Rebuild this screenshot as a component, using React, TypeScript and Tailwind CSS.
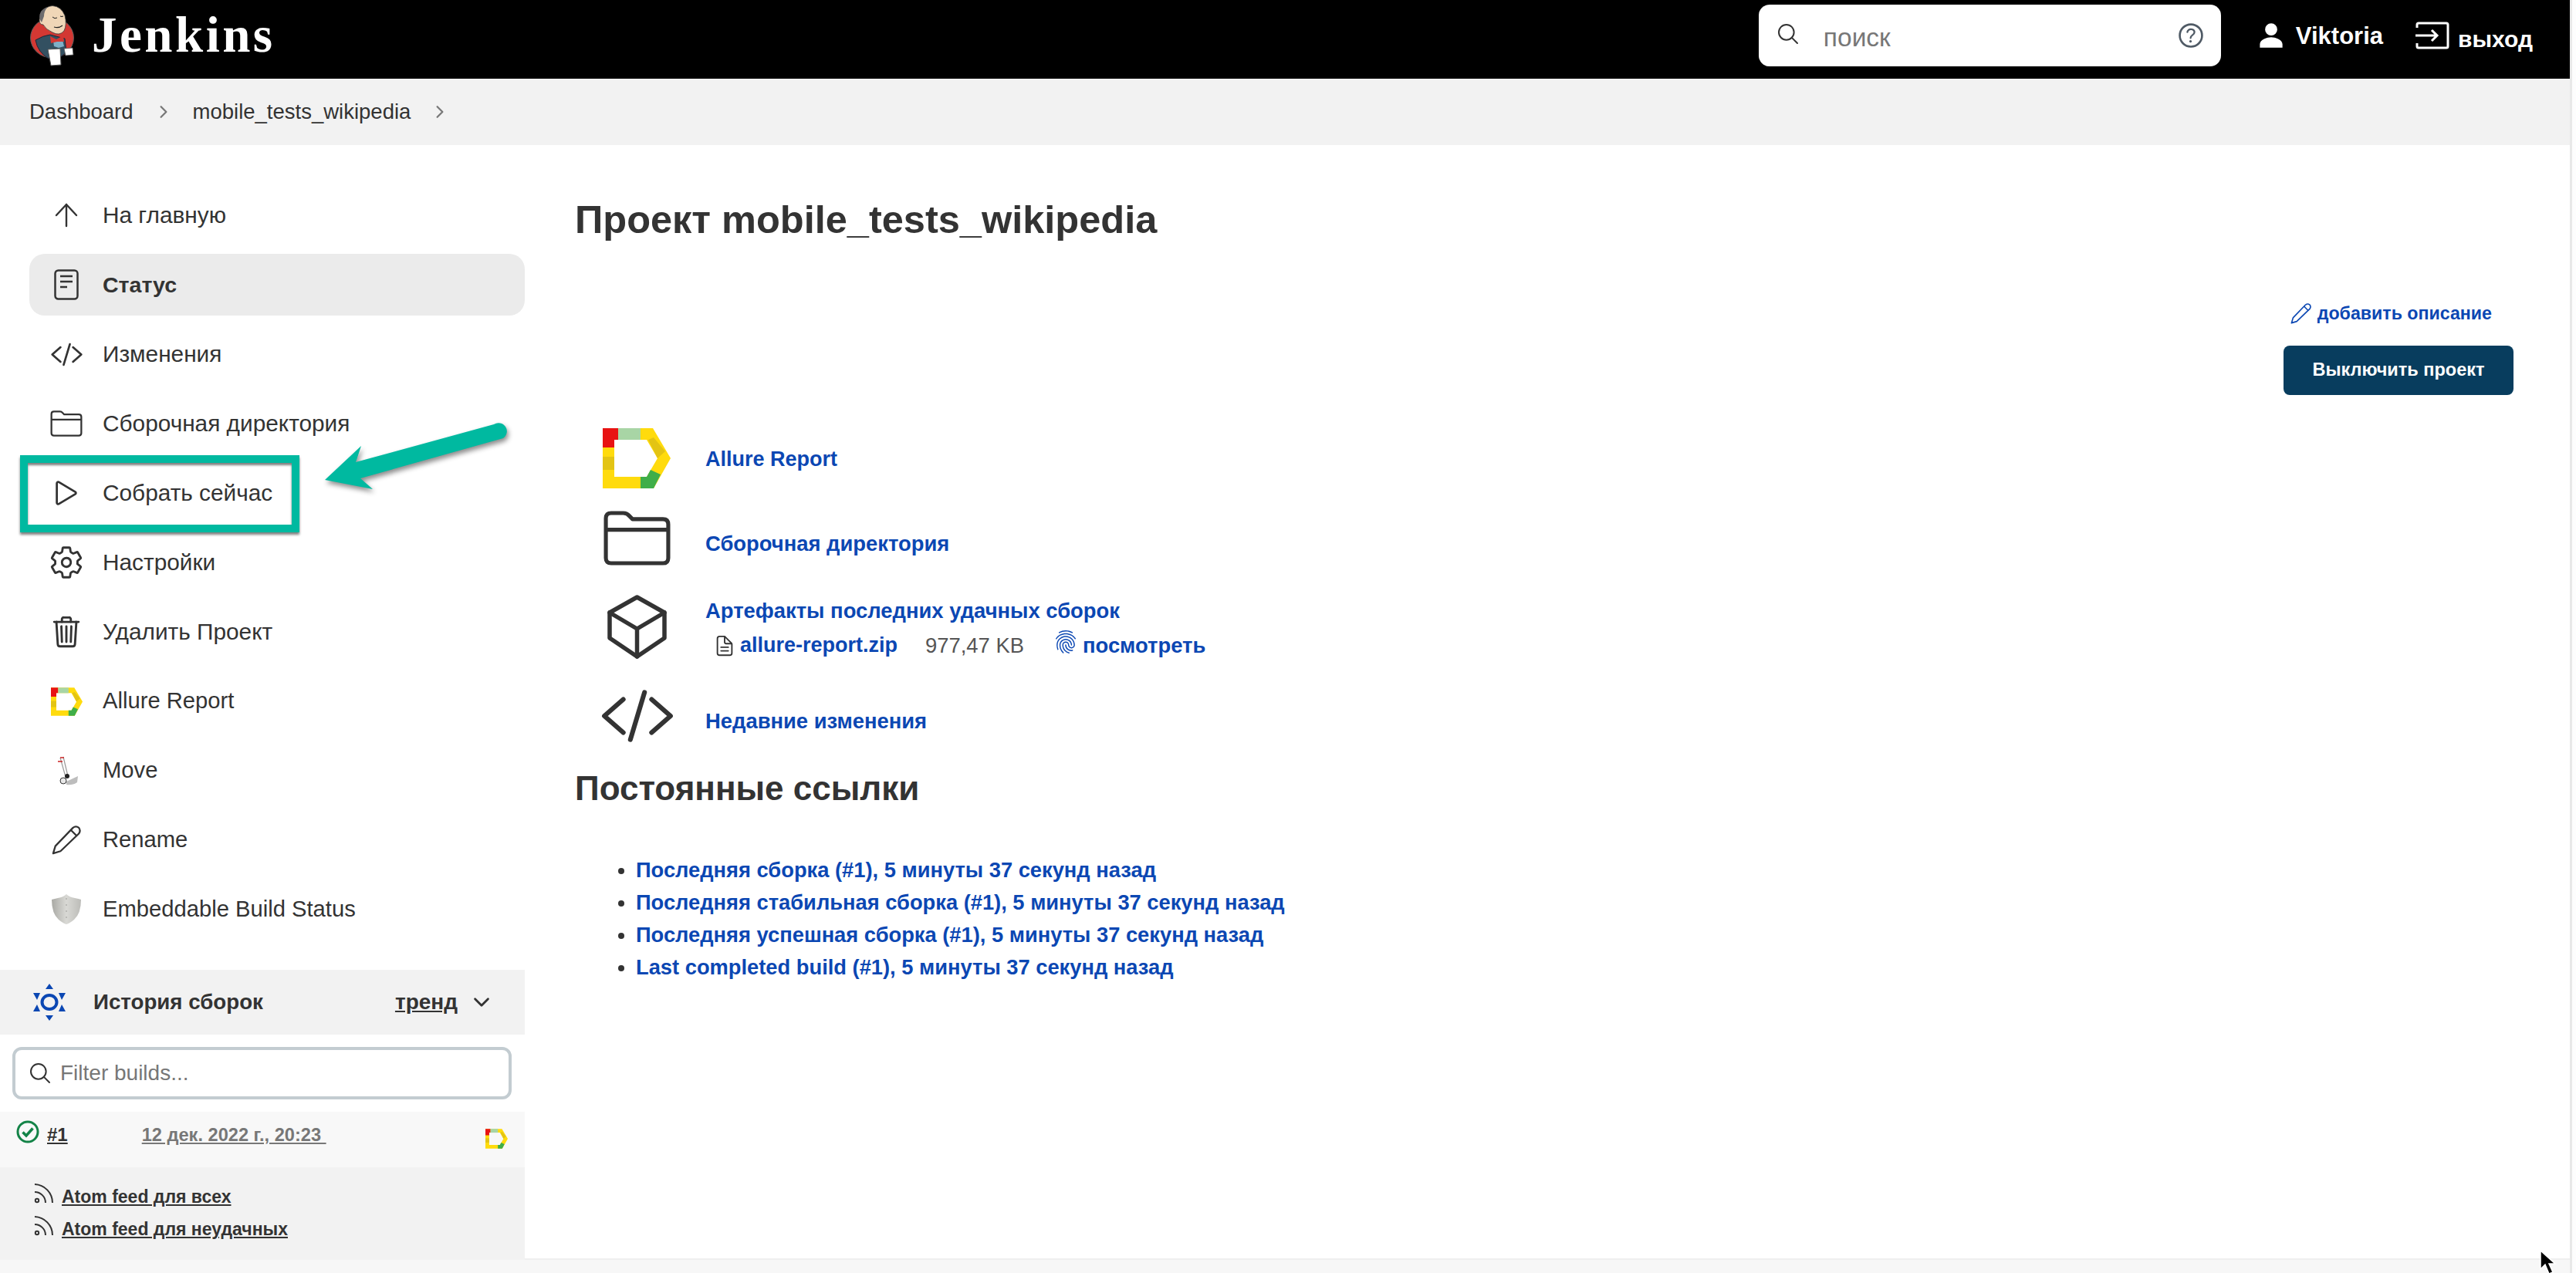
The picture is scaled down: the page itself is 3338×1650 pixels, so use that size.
import {
  IoChevronDownOutline,
  IoChevronForwardOutline,
  IoCodeSlashOutline,
  IoDocumentTextOutline,
  IoFingerPrintOutline,
  IoHelpCircleOutline,
  IoPersonSharp,
  IoPlayOutline,
  IoSearchOutline,
  IoSettingsOutline,
  IoTrashOutline,
} from 'react-icons/io5';
import type { ReactNode } from 'react';

const JenkinsLogo = () => (
  <svg viewBox="38 6 58 80" className="w-[58px] h-[80px] shrink-0">
    <ellipse cx="66.5" cy="49" rx="28" ry="26" fill="#d33833" stroke="#5b5b5b" strokeWidth="1" />
    <path d="M45 52 Q55 46 64 45 L83 50 L85 68 L77 74 L62 76 Q48 68 45 52Z" fill="#335061" stroke="#223" strokeWidth="1" />
    <path d="M68 53 L80 52 L82 60 L75 62 L69 60Z" fill="#7fb0c8" />
    <path d="M64 47 L72 51 L81 46 L82 54 L73 54 L65 56Z" fill="#d33833" />
    <path d="M53 17 Q58 8 67 7.5 Q78 8 83 20 Q86 32 82 40 Q76 47 67 42 Q58 38 55 32 Q50 32 50 26 Q50 22 53 17Z" fill="#f0d6b7" stroke="#3a3a3a" strokeWidth="0.8" />
    <path d="M53 29 Q48 22 52 15 Q56 10 61 9 Q56 14 56 21 Z" fill="#6d6b6d" />
    <path d="M67 22 Q70 25 73 23 M77 21 Q79 22 81 21" stroke="#222" strokeWidth="1" fill="none" />
    <path d="M69 35 Q75 37 80 33" stroke="#222" strokeWidth="1.2" fill="none" />
    <path d="M61 64 L77 63 L78 84 L65 85Z" fill="#fff" stroke="#555" strokeWidth="1" />
    <path d="M82 63 L93 62 L94 71 L84 72Z" fill="#fff" stroke="#555" strokeWidth="0.8" />
  </svg>
);

const AllureIcon = ({ className }: { className: string }) => (
  <svg viewBox="0 0 88 78" className={className}>
    <path fillRule="evenodd" d="M0 0H65L88 39L66 78H0ZM15 15V63H57L71 39L57 15Z" fill="#ffdb0d" />
    <path d="M0 0H20V15H15V25H0Z" fill="#e81313" />
    <path d="M20 0H49V15H20Z" fill="#a8d5a5" />
    <path d="M0 37H15V54H0Z" fill="#e3c414" />
    <path d="M59 15L66 12L81 30L71 39Z" fill="#e3c414" />
    <path d="M49 63H57L62 54L75 60L66 78H49Z" fill="#3fae49" />
  </svg>
);

const FolderIcon = ({ className, w = 2 }: { className: string; w?: number }) => (
  <svg viewBox="0 0 44 36" className={className} fill="none" stroke="#333" strokeWidth={w}>
    <path d="M1.5 7V5Q1.5 1.5 5 1.5H13Q15.5 1.5 17 3.5L19 5.5H39Q42.5 5.5 42.5 9V31Q42.5 34.5 39 34.5H5Q1.5 34.5 1.5 31Z" strokeLinejoin="round" />
    <path d="M1.5 12.5H42.5" />
  </svg>
);

const ArrowUpIcon = () => (
  <svg viewBox="0 0 30 32" className="w-[30px] h-[32px]" fill="none" stroke="#333" strokeWidth="2.4" strokeLinecap="round" strokeLinejoin="round">
    <path d="M15 30V2M2 16L15 2L28 16" />
  </svg>
);

const StatusIcon = () => (
  <svg viewBox="0 0 32 40" className="w-[32px] h-[40px]" fill="none" stroke="#333">
    <rect x="1.5" y="1.5" width="29" height="37" rx="4" strokeWidth="2.5" />
    <path d="M8 9H24M8 16H24M8 23H17" strokeWidth="2.5" />
  </svg>
);

const PencilIcon = ({ className, color = '#333' }: { className: string; color?: string }) => (
  <svg viewBox="0 0 40 40" className={className} fill="none" stroke={color} strokeWidth="2.4" strokeLinejoin="round">
    <path d="M2 38L5 28L29 3Q33 0 37 3Q40 7 37 11L12 35Z" />
    <path d="M26 6L34 14" />
  </svg>
);

const CubeIcon = () => (
  <svg viewBox="0 0 77 83" className="w-[77px] h-[83px]" fill="none" stroke="#333" strokeWidth="5.5" strokeLinejoin="round" strokeLinecap="round">
    <path d="M38.5 3L74 23V56L38.5 80L3 56V23Z" />
    <path d="M3 23L38.5 44L74 23M38.5 44V80" />
  </svg>
);

const RssIcon = () => (
  <svg viewBox="0 0 25 27" className="w-[25px] h-[27px] shrink-0" fill="none" stroke="#333" strokeWidth="2">
    <circle cx="4" cy="23" r="2.2" />
    <path d="M1 12A14 14 0 0 1 15 26M1 2A24 24 0 0 1 24 26" />
  </svg>
);

const CheckIcon = () => (
  <svg viewBox="0 0 30 30" className="w-[30px] h-[30px] shrink-0 mt-[11px]" fill="none" stroke="#138347">
    <circle cx="15" cy="15" r="13" strokeWidth="3" />
    <path d="M8.5 15.5L13 20L21.5 10.5" strokeWidth="3.5" />
  </svg>
);

const MoveIcon = () => (
  <svg viewBox="0 0 32 40" className="w-[32px] h-[40px]">
    <path d="M8 3L15 28M12 2L18 27" stroke="#9a9a9a" strokeWidth="1.2" fill="none" />
    <path d="M5 8H11M8 3H13" stroke="#c22" strokeWidth="1.5" />
    <path d="M16 34L31 27L30 35Q24 39 16 38Z" fill="#bdbdbd" />
    <circle cx="17" cy="27" r="3" fill="#222" />
    <circle cx="12" cy="33" r="4" fill="#e8e8e8" stroke="#333" strokeWidth="1" />
  </svg>
);

const ShieldIcon = () => (
  <svg viewBox="0 0 40 42" className="w-[40px] h-[42px]">
    <defs>
      <linearGradient id="shield" x1="0" x2="1">
        <stop offset="0" stopColor="#a9a9a4" />
        <stop offset="0.5" stopColor="#d9d9d5" />
        <stop offset="1" stopColor="#bcbcb8" />
      </linearGradient>
    </defs>
    <path d="M20 1Q24 5 31 6Q36 7 39 8Q39 26 30 34Q24 39 20 40Q16 39 10 34Q1 26 1 8Q5 7 9 6Q16 5 20 1Z" fill="url(#shield)" />
    <path d="M20 6V36" stroke="#9c9c98" strokeWidth="1" strokeDasharray="2 6" />
  </svg>
);

const HistoryIcon = () => (
  <svg viewBox="0 0 42 48" className="w-[42px] h-[48px] shrink-0" fill="#0b47b3">
    <ellipse cx="21" cy="24" rx="9.5" ry="9" fill="none" stroke="#0b47b3" strokeWidth="4" />
    <path d="M21 0L26 7H16ZM21 48L16 41H26Z" />
    <path d="M0 12L9 12L5 21ZM42 12L33 12L37 21ZM0 36L5 27L9 36ZM42 36L37 27L33 36Z" />
  </svg>
);

const LogoutIcon = () => (
  <svg viewBox="0 0 44 36" className="w-[44px] h-[36px] shrink-0" fill="none" stroke="#fff" strokeWidth="3">
    <path d="M2 8V4Q2 2 4 2H40Q42 2 42 4V32Q42 34 40 34H4Q2 34 2 32V28" />
    <path d="M0 18H28M21 11L28 18L21 25" />
  </svg>
);

const SideItem = ({ icon, label, active, latin }: { icon: ReactNode; label: string; active?: boolean; latin?: boolean }) => (
  <div className={`h-[80px] mb-[10px] rounded-[20px] flex items-center pl-[24px] ${active ? 'bg-[#ebebeb]' : ''}`}>
    <div className="w-[48px] h-[48px] flex items-center justify-center shrink-0 text-[#333]">{icon}</div>
    <span className={`ml-[23px] text-[#333] ${latin ? 'text-[29.2px]' : active ? 'text-[28.5px] font-bold' : 'text-[29.8px]'}`}>{label}</span>
  </div>
);

const Sidebar = () => (
  <aside className="w-[680px] shrink-0 flex flex-col">
    <div className="pt-[51px] pl-[38px]">
      <SideItem icon={<ArrowUpIcon />} label="На главную" />
      <SideItem icon={<StatusIcon />} label="Статус" active />
      <SideItem icon={<IoCodeSlashOutline size={43} />} label="Изменения" />
      <SideItem icon={<FolderIcon className="w-[42px] h-[34px]" w={2.4} />} label="Сборочная директория" />
      <SideItem icon={<IoPlayOutline size={44} />} label="Собрать сейчас" />
      <SideItem icon={<IoSettingsOutline size={46} />} label="Настройки" />
      <SideItem icon={<IoTrashOutline size={46} />} label="Удалить Проект" />
      <SideItem icon={<AllureIcon className="w-[41px] h-[37px]" />} label="Allure Report" latin />
      <SideItem icon={<MoveIcon />} label="Move" latin />
      <SideItem icon={<PencilIcon className="w-[38px] h-[38px]" />} label="Rename" latin />
      <SideItem icon={<ShieldIcon />} label="Embeddable Build Status" latin />
    </div>

    <div className="mt-[28px] h-[84px] bg-[#f2f2f2] flex items-center pl-[43px] pr-[41px]">
      <HistoryIcon />
      <span className="ml-[36px] text-[27.7px] font-bold text-[#333]">История сборок</span>
      <span className="ml-auto text-[28px] font-bold text-[#333] underline">тренд</span>
      <IoChevronDownOutline size={30} className="ml-[16px] text-[#333]" />
    </div>

    <div className="h-[100px] px-[16px] pt-[16px] pr-[17px]">
      <div className="h-[68px] border-4 border-[#c3ccd1] rounded-[12px] flex items-center pl-[16px] bg-white">
        <IoSearchOutline size={32} className="text-[#333] shrink-0" />
        <span className="ml-[10px] text-[28px] text-[#777]">Filter builds...</span>
      </div>
    </div>

    <div className="h-[72px] bg-[#f8f8f8] flex items-start pl-[21px] pr-[22px]">
      <CheckIcon />
      <a className="ml-[10px] mt-[16px] text-[24px] leading-[28px] font-bold text-[#333] underline">#1</a>
      <a className="ml-[96px] mt-[16px] text-[23.6px] leading-[28px] font-bold text-[#777] underline whitespace-pre">12 дек. 2022 г., 20:23 </a>
      <AllureIcon className="ml-auto mt-[22px] w-[29px] h-[26px] shrink-0" />
    </div>

    <div className="h-[120px] bg-[#f2f2f2] pl-[44px] pt-[20px] flex flex-col gap-[15px]">
      <div className="flex items-center h-[27px]">
        <RssIcon />
        <a className="ml-[11px] mt-[10px] text-[23px] font-bold text-[#333] underline">Atom feed для всех</a>
      </div>
      <div className="flex items-center h-[27px]">
        <RssIcon />
        <a className="ml-[11px] mt-[10px] text-[23px] font-bold text-[#333] underline">Atom feed для неудачных</a>
      </div>
    </div>
    <div className="flex-1 bg-[#f7f7f7]" />
  </aside>
);

const Main = () => (
  <main className="flex-1 pl-[65px] pr-[73px] pt-[67px]">
    <h1 className="text-[50.5px] leading-[60px] font-bold text-[#333]">Проект mobile_tests_wikipedia</h1>

    <div className="mt-[71px] h-[40px] flex items-center justify-end pr-[28px]">
      <PencilIcon className="w-[27px] h-[27px]" color="#0b47b3" />
      <a className="ml-[8px] text-[23.2px] font-bold text-[#0b47b3]">добавить описание</a>
    </div>
    <div className="mt-[22px] flex justify-end">
      <button className="w-[298px] h-[64px] rounded-[8px] bg-[#083d5e] text-white text-[23.5px] font-bold">Выключить проект</button>
    </div>

    <div className="mt-[43px] pl-[36px] flex flex-col text-[#0b47b3] text-[27.4px] font-bold">
      <div className="flex items-center">
        <AllureIcon className="w-[88px] h-[78px] shrink-0" />
        <a className="ml-[45px] pt-[2px] text-[27px]">Allure Report</a>
      </div>
      <div className="mt-[29px] flex items-center">
        <FolderIcon className="w-[89px] h-[71px] shrink-0" w={2.6} />
        <a className="ml-[44px] pt-[14px]">Сборочная директория</a>
      </div>
      <div className="mt-[38px] flex items-start">
        <div className="w-[89px] flex justify-center shrink-0">
          <CubeIcon />
        </div>
        <div className="ml-[44px] h-[83px] flex flex-col">
          <a className="h-[44px] flex items-center">Артефакты последних удачных сборок</a>
          <div className="h-[46px] mt-[4px] flex items-center pl-[10px]">
            <IoDocumentTextOutline size={30} className="text-[#333]" />
            <a className="ml-[5px] text-[27px]">allure-report.zip</a>
            <span className="ml-[36px] text-[#555] font-normal">977,47 KB</span>
            <IoFingerPrintOutline size={32} className="ml-[38px] -mt-[10px]" />
            <a className="ml-[6px]">посмотреть</a>
          </div>
        </div>
      </div>
      <div className="mt-[41px] flex items-center">
        <IoCodeSlashOutline size={98} className="text-[#333] shrink-0 -my-[16px] -ml-[4px] -mr-[5px]" />
        <a className="ml-[44px] pt-[14px]">Недавние изменения</a>
      </div>
    </div>

    <h2 className="mt-[36px] text-[44px] leading-[50px] font-bold text-[#333]">Постоянные ссылки</h2>

    <ul className="mt-[60px] pl-[79px] list-disc text-[27.3px] font-bold text-[#0b47b3] marker:text-[#333]">
      <li className="h-[42px] leading-[42px]"><a>Последняя сборка (#1), 5 минуты 37 секунд назад</a></li>
      <li className="h-[42px] leading-[42px]"><a>Последняя стабильная сборка (#1), 5 минуты 37 секунд назад</a></li>
      <li className="h-[42px] leading-[42px]"><a>Последняя успешная сборка (#1), 5 минуты 37 секунд назад</a></li>
      <li className="h-[42px] leading-[42px]"><a>Last completed build (#1), 5 минуты 37 секунд назад</a></li>
    </ul>
  </main>
);

export default function App() {
  return (
    <div className="relative w-[3338px] h-[1650px] overflow-hidden bg-white flex font-['Liberation_Sans',Arial,sans-serif]">
      <div className="w-[3330px] flex flex-col">
        <header className="h-[102px] bg-black flex items-center pl-[39px] pb-[10px] shrink-0">
          <JenkinsLogo />
          <span className="ml-[22px] text-[65px] font-bold text-white font-['Liberation_Serif',serif] tracking-[3.5px]">Jenkins</span>
          <div className="ml-auto w-[599px] h-[80px] rounded-[14px] bg-white flex items-center pl-[22px] pr-[18px]">
            <IoSearchOutline size={32} className="text-[#333] -mt-[4px]" />
            <span className="ml-[30px] text-[33.5px] text-[#777] mt-[6px]">поиск</span>
            <IoHelpCircleOutline size={42} className="ml-auto text-[#4f5a65]" />
          </div>
          <IoPersonSharp size={36} className="ml-[47px] text-white" />
          <span className="ml-[14px] text-[31px] font-bold text-white mt-[2px]">Viktoria</span>
          <div className="ml-[42px]"><LogoutIcon /></div>
          <span className="ml-[11px] text-[30px] font-bold text-white mr-[48px] mt-[8px]">выход</span>
        </header>

        <nav className="h-[86px] bg-[#f2f2f2] flex items-center pl-[38px] text-[27.5px] text-[#333] shrink-0">
          <span>Dashboard</span>
          <IoChevronForwardOutline size={24} className="ml-[27px] text-[#777]" />
          <span className="ml-[26px]">mobile_tests_wikipedia</span>
          <IoChevronForwardOutline size={24} className="ml-[26px] text-[#777]" />
        </nav>

        <div className="flex flex-1 min-h-0">
          <Sidebar />
          <div className="flex-1 flex flex-col min-w-0">
            <Main />
            <div className="h-[19px] mt-auto bg-[#f7f7f7] border-t-2 border-[#efefef]" />
          </div>
        </div>
      </div>
      <div className="w-[8px] border-l-[3px] border-[#e8e8e8] bg-[#fdfdfd]" />

      {/* annotation drawn over the screenshot */}
      <div className="absolute left-[26px] top-[590px] w-[362px] h-[100px] border-[10px] border-[#00b9a0] shadow-[0_3px_3px_rgba(0,0,0,0.5),inset_0_3px_3px_rgba(0,0,0,0.5)]" />
      <svg viewBox="400 530 280 120" className="absolute left-[400px] top-[530px] w-[280px] h-[120px] drop-shadow-[2px_4px_3px_rgba(0,0,0,0.45)]">
        <path d="M421 622L468 578L461 599L640 550A10 10 0 0 1 652 568L467 620L483 634Z" fill="#00b9a0" />
      </svg>

      {/* mouse cursor */}
      <svg viewBox="0 0 24 32" className="absolute left-[3290px] top-[1620px] w-[24px] h-[32px]">
        <path d="M2 1L2 25L8 19L13 31L18 29L13 18L21 18Z" fill="#000" stroke="#fff" strokeWidth="1.5" />
      </svg>
    </div>
  );
}
